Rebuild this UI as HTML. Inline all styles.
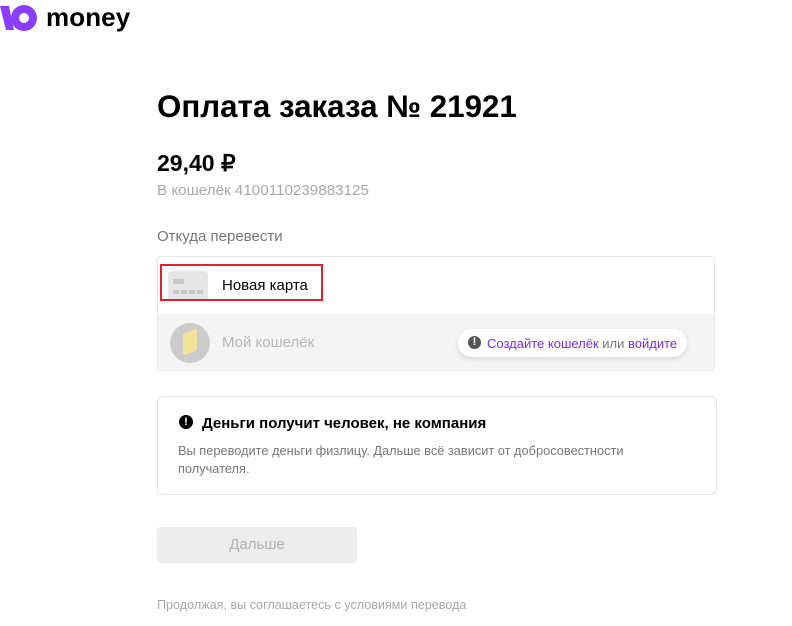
<!DOCTYPE html>
<html><head><meta charset="utf-8"><style>
body{margin:0;width:792px;height:626px;background:#fff;font-family:"Liberation Sans",sans-serif;position:relative;overflow:hidden;color:#000}
.a{position:absolute}
</style></head><body>
<svg class="a" style="left:0;top:4px" width="40" height="28" viewBox="0 0 40 28">
<path d="M0 2h9l5 24h-8z" fill="#8b3ffd"/>
<path d="M24 1a13 13 0 1 1 0 26a13 13 0 1 1 0-26zm0 8a5 5 0 1 0 0 10a5 5 0 1 0 0-10z" fill="#8b3ffd" fill-rule="evenodd"/>
</svg>
<div class="a" style="left:46px;top:2px;font-size:26px;font-weight:bold;letter-spacing:0.1px">money</div>
<div class="a" style="left:157px;top:89px;font-size:31.3px;font-weight:bold">Оплата заказа № 21921</div>
<div class="a" style="left:157px;top:150px;font-size:23px;font-weight:bold">29,40 ₽</div>
<div class="a" style="left:157px;top:182px;font-size:15.2px;color:#a8a8a8">В кошелёк 4100110239883125</div>
<div class="a" style="left:157px;top:228px;font-size:15px;color:#777">Откуда перевести</div>
<div class="a" style="left:157px;top:256px;width:558px;height:115px;border:1px solid #e6e6e6;border-radius:3px;box-sizing:border-box;overflow:hidden">
 <div class="a" style="left:0;top:57px;width:558px;height:58px;background:#f4f4f4"></div>
 <div class="a" style="left:10px;top:14px;width:40px;height:30px;background:#e6e6e6;border-radius:4px"></div>
 <div class="a" style="left:15px;top:22px;width:11px;height:5px;background:#c8c8c8"></div>
 <div class="a" style="left:15px;top:33px;width:30px;height:4px;background:repeating-linear-gradient(90deg,#c8c8c8 0 6px,transparent 6px 8px)"></div>
 <div class="a" style="left:64px;top:20px;font-size:15px">Новая карта</div>
 <div class="a" style="left:2px;top:7px;width:163px;height:37px;border:2px solid #e5202e;box-sizing:border-box"></div>
 <div class="a" style="left:12px;top:66px;width:40px;height:40px;background:#cbcbcb;border-radius:50%"></div>
 <div class="a" style="left:25px;top:74px;width:14px;height:22px;background:#f3e39a;border-radius:2px;transform:skewY(-20deg)"></div>
 <div class="a" style="left:64px;top:77px;font-size:15px;color:#b5b5b5">Мой кошелёк</div>
 <div class="a" style="left:300px;top:72px;width:229px;height:28px;background:#fff;border-radius:14px;box-shadow:0 2px 6px rgba(0,0,0,.12)"></div>
 <div class="a" style="left:310px;top:79px;width:13px;height:13px;background:#555;border-radius:50%;color:#fff;font-size:11px;font-weight:bold;text-align:center;line-height:13px">!</div>
 <div class="a" style="left:329px;top:79px;font-size:13px;color:#7a2cf0">Создайте кошелёк <span style="color:#777">или</span> войдите</div>
</div>
<div class="a" style="left:157px;top:396px;width:560px;height:99px;border:1px solid #e6e6e6;border-radius:6px;box-sizing:border-box">
 <div class="a" style="left:21px;top:18px;width:14px;height:14px;background:#000;border-radius:50%;color:#fff;font-size:11px;font-weight:bold;text-align:center;line-height:14px">!</div>
 <div class="a" style="left:44px;top:18px;font-size:15px;font-weight:bold">Деньги получит человек, не компания</div>
 <div class="a" style="left:20px;top:45px;width:480px;font-size:12.8px;line-height:18px;color:#777">Вы переводите деньги физлицу. Дальше всё зависит от добросовестности получателя.</div>
</div>
<div class="a" style="left:157px;top:527px;width:200px;height:36px;background:#ededed;border-radius:3px;color:#b0b0b0;font-size:15px;text-align:center;line-height:36px">Дальше</div>
<div class="a" style="left:157px;top:598px;font-size:12.6px;color:#a8a8a8">Продолжая, вы соглашаетесь с условиями перевода</div>
</body></html>
